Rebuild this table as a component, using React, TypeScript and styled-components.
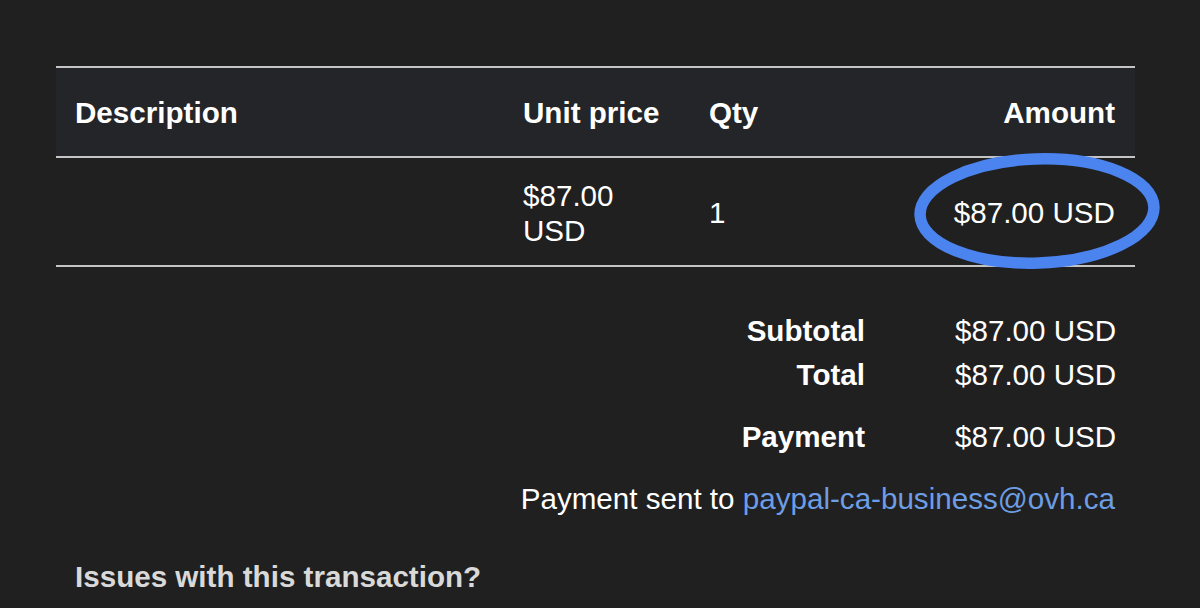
import React from "react";
import styled, { createGlobalStyle } from "styled-components";

const Global = createGlobalStyle`
  html, body { margin: 0; padding: 0; background: #202020; }
  body { font-family: "Liberation Sans", Arial, Helvetica, sans-serif; color: #ffffff; }
  * { box-sizing: border-box; }
`;

const Page = styled.div`
  width: 1200px;
  height: 608px;
  overflow: hidden;
  padding: 66px 65px 0 56px;
  position: relative;
`;

const Table = styled.div`
  display: grid;
  grid-template-columns: 448px 186px 1fr auto;
  border-top: 2px solid #c4c4c4;
  border-bottom: 2px solid #c4c4c4;
`;

const HeadCell = styled.div<{ $right?: boolean }>`
  background: #242528;
  height: 90px;
  display: flex;
  align-items: center;
  justify-content: ${(p) => (p.$right ? "flex-end" : "flex-start")};
  padding: 2px 20px 0 19px;
  font-weight: 700;
  font-size: 29.6px;
  border-bottom: 2px solid #c4c4c4;
`;

const Cell = styled.div<{ $right?: boolean }>`
  height: 107px;
  display: flex;
  align-items: center;
  justify-content: ${(p) => (p.$right ? "flex-end" : "flex-start")};
  padding: 2px 20px 0 19px;
  font-size: 29.6px;
  line-height: 35px;
  position: relative;
`;

const Summary = styled.div`
  display: grid;
  grid-template-columns: auto 160px;
  column-gap: 90px;
  justify-content: end;
  padding-right: 20px;
  margin-top: 42px;
  font-size: 29.6px;
  line-height: 44px;
`;

const Label = styled.div<{ $gap?: boolean }>`
  font-weight: 700;
  text-align: right;
  margin-top: ${(p) => (p.$gap ? "18px" : "0")};
`;

const Value = styled.div<{ $gap?: boolean }>`
  text-align: right;
  white-space: nowrap;
  margin-top: ${(p) => (p.$gap ? "18px" : "0")};
`;

const SentLine = styled.div`
  margin-top: 18px;
  padding-right: 20px;
  text-align: right;
  font-size: 29.6px;
  line-height: 44px;
`;

const Link = styled.a`
  color: #6d9de4;
  text-decoration: none;
`;

const Issues = styled.div`
  margin-top: 34px;
  padding-left: 19px;
  font-size: 29.6px;
  line-height: 44px;
  font-weight: 700;
  color: #d9d9d9;
`;

const Circle = styled.svg`
  position: absolute;
  left: 904px;
  top: 146px;
  width: 266px;
  height: 132px;
  overflow: visible;
  pointer-events: none;
`;

export default function App() {
  return (
    <>
      <Global />
      <Page>
        <Table>
          <HeadCell>Description</HeadCell>
          <HeadCell>Unit price</HeadCell>
          <HeadCell>Qty</HeadCell>
          <HeadCell $right>Amount</HeadCell>
          <Cell />
          <Cell>$87.00 USD</Cell>
          <Cell>1</Cell>
          <Cell $right>$87.00 USD</Cell>
        </Table>
        <Summary>
          <Label>Subtotal</Label>
          <Value>$87.00 USD</Value>
          <Label>Total</Label>
          <Value>$87.00 USD</Value>
          <Label $gap>Payment</Label>
          <Value $gap>$87.00 USD</Value>
        </Summary>
        <SentLine>
          Payment sent to <Link href="#">paypal-ca-business@ovh.ca</Link>
        </SentLine>
        <Issues>Issues with this transaction?</Issues>
        <Circle viewBox="0 0 266 132">
          <ellipse
            cx="133"
            cy="65"
            rx="117"
            ry="52"
            fill="none"
            stroke="#4b83ef"
            strokeWidth="11.5"
            transform="rotate(-2 133 65)"
          />
        </Circle>
      </Page>
    </>
  );
}
